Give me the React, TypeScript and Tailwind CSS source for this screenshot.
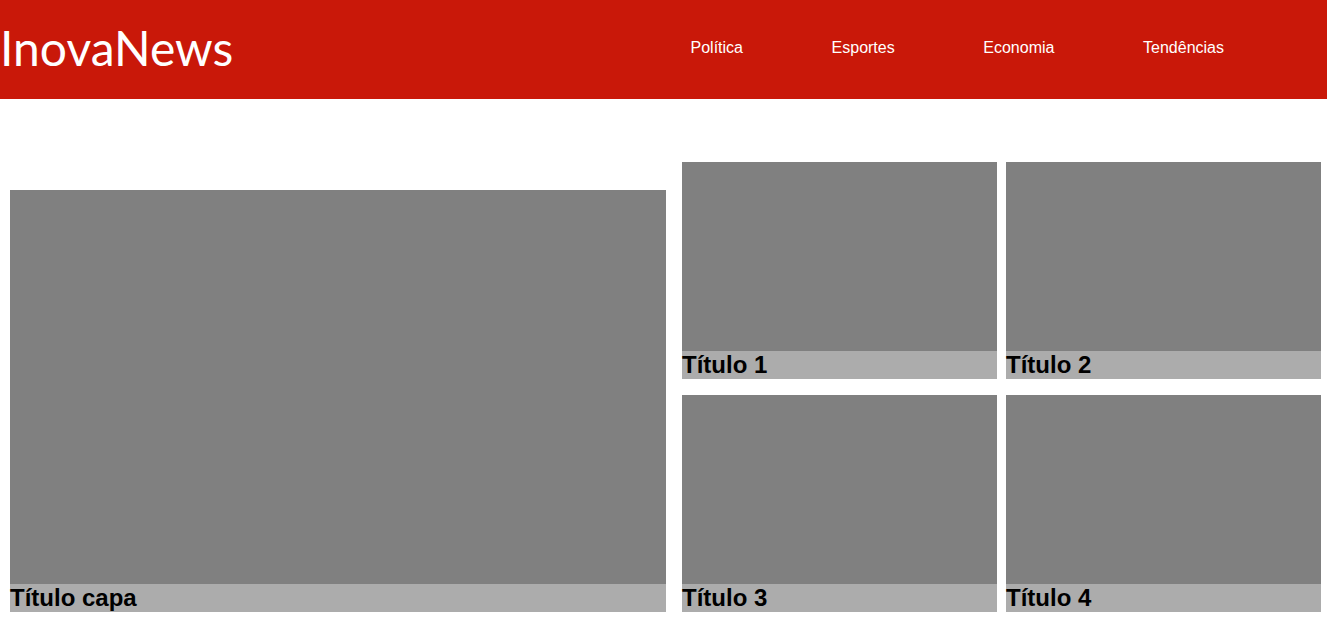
const links = ["Política", "Esportes", "Economia", "Tendências"];
const stories = ["Título 1", "Título 2", "Título 3", "Título 4"];

function Story({ title, ratio }: { title: string; ratio: string }) {
  return (
    <article className={`flex flex-col justify-end bg-[#808080] ${ratio}`}>
      <h2 className="bg-[#acacac] text-2xl leading-7 font-bold text-black">{title}</h2>
    </article>
  );
}

export default function App() {
  return (
    <div className="bg-white font-['Liberation_Sans',Arial,sans-serif]">
      <header className="flex items-center bg-[#c91809] pt-4 pb-[19px] text-white">
        <h1 className="w-1/2 font-['Lato',sans-serif] text-5xl leading-16">InovaNews</h1>
        <nav className="flex w-1/2 justify-between pr-[103px] pl-[27px]">
          {links.map((link) => (
            <a key={link} href="#" className="text-base">
              {link}
            </a>
          ))}
        </nav>
      </header>
      <main className="flex items-end gap-4 pt-[63px] pr-1.5 pb-2 pl-2.5">
        <div className="min-w-0 flex-[656]">
          <Story title="Título capa" ratio="aspect-[656/422]" />
        </div>
        <section className="grid min-w-0 flex-[639] grid-cols-2 gap-x-[9px] gap-y-4">
          {stories.map((title) => (
            <Story key={title} title={title} ratio="aspect-[315/217]" />
          ))}
        </section>
      </main>
    </div>
  );
}
